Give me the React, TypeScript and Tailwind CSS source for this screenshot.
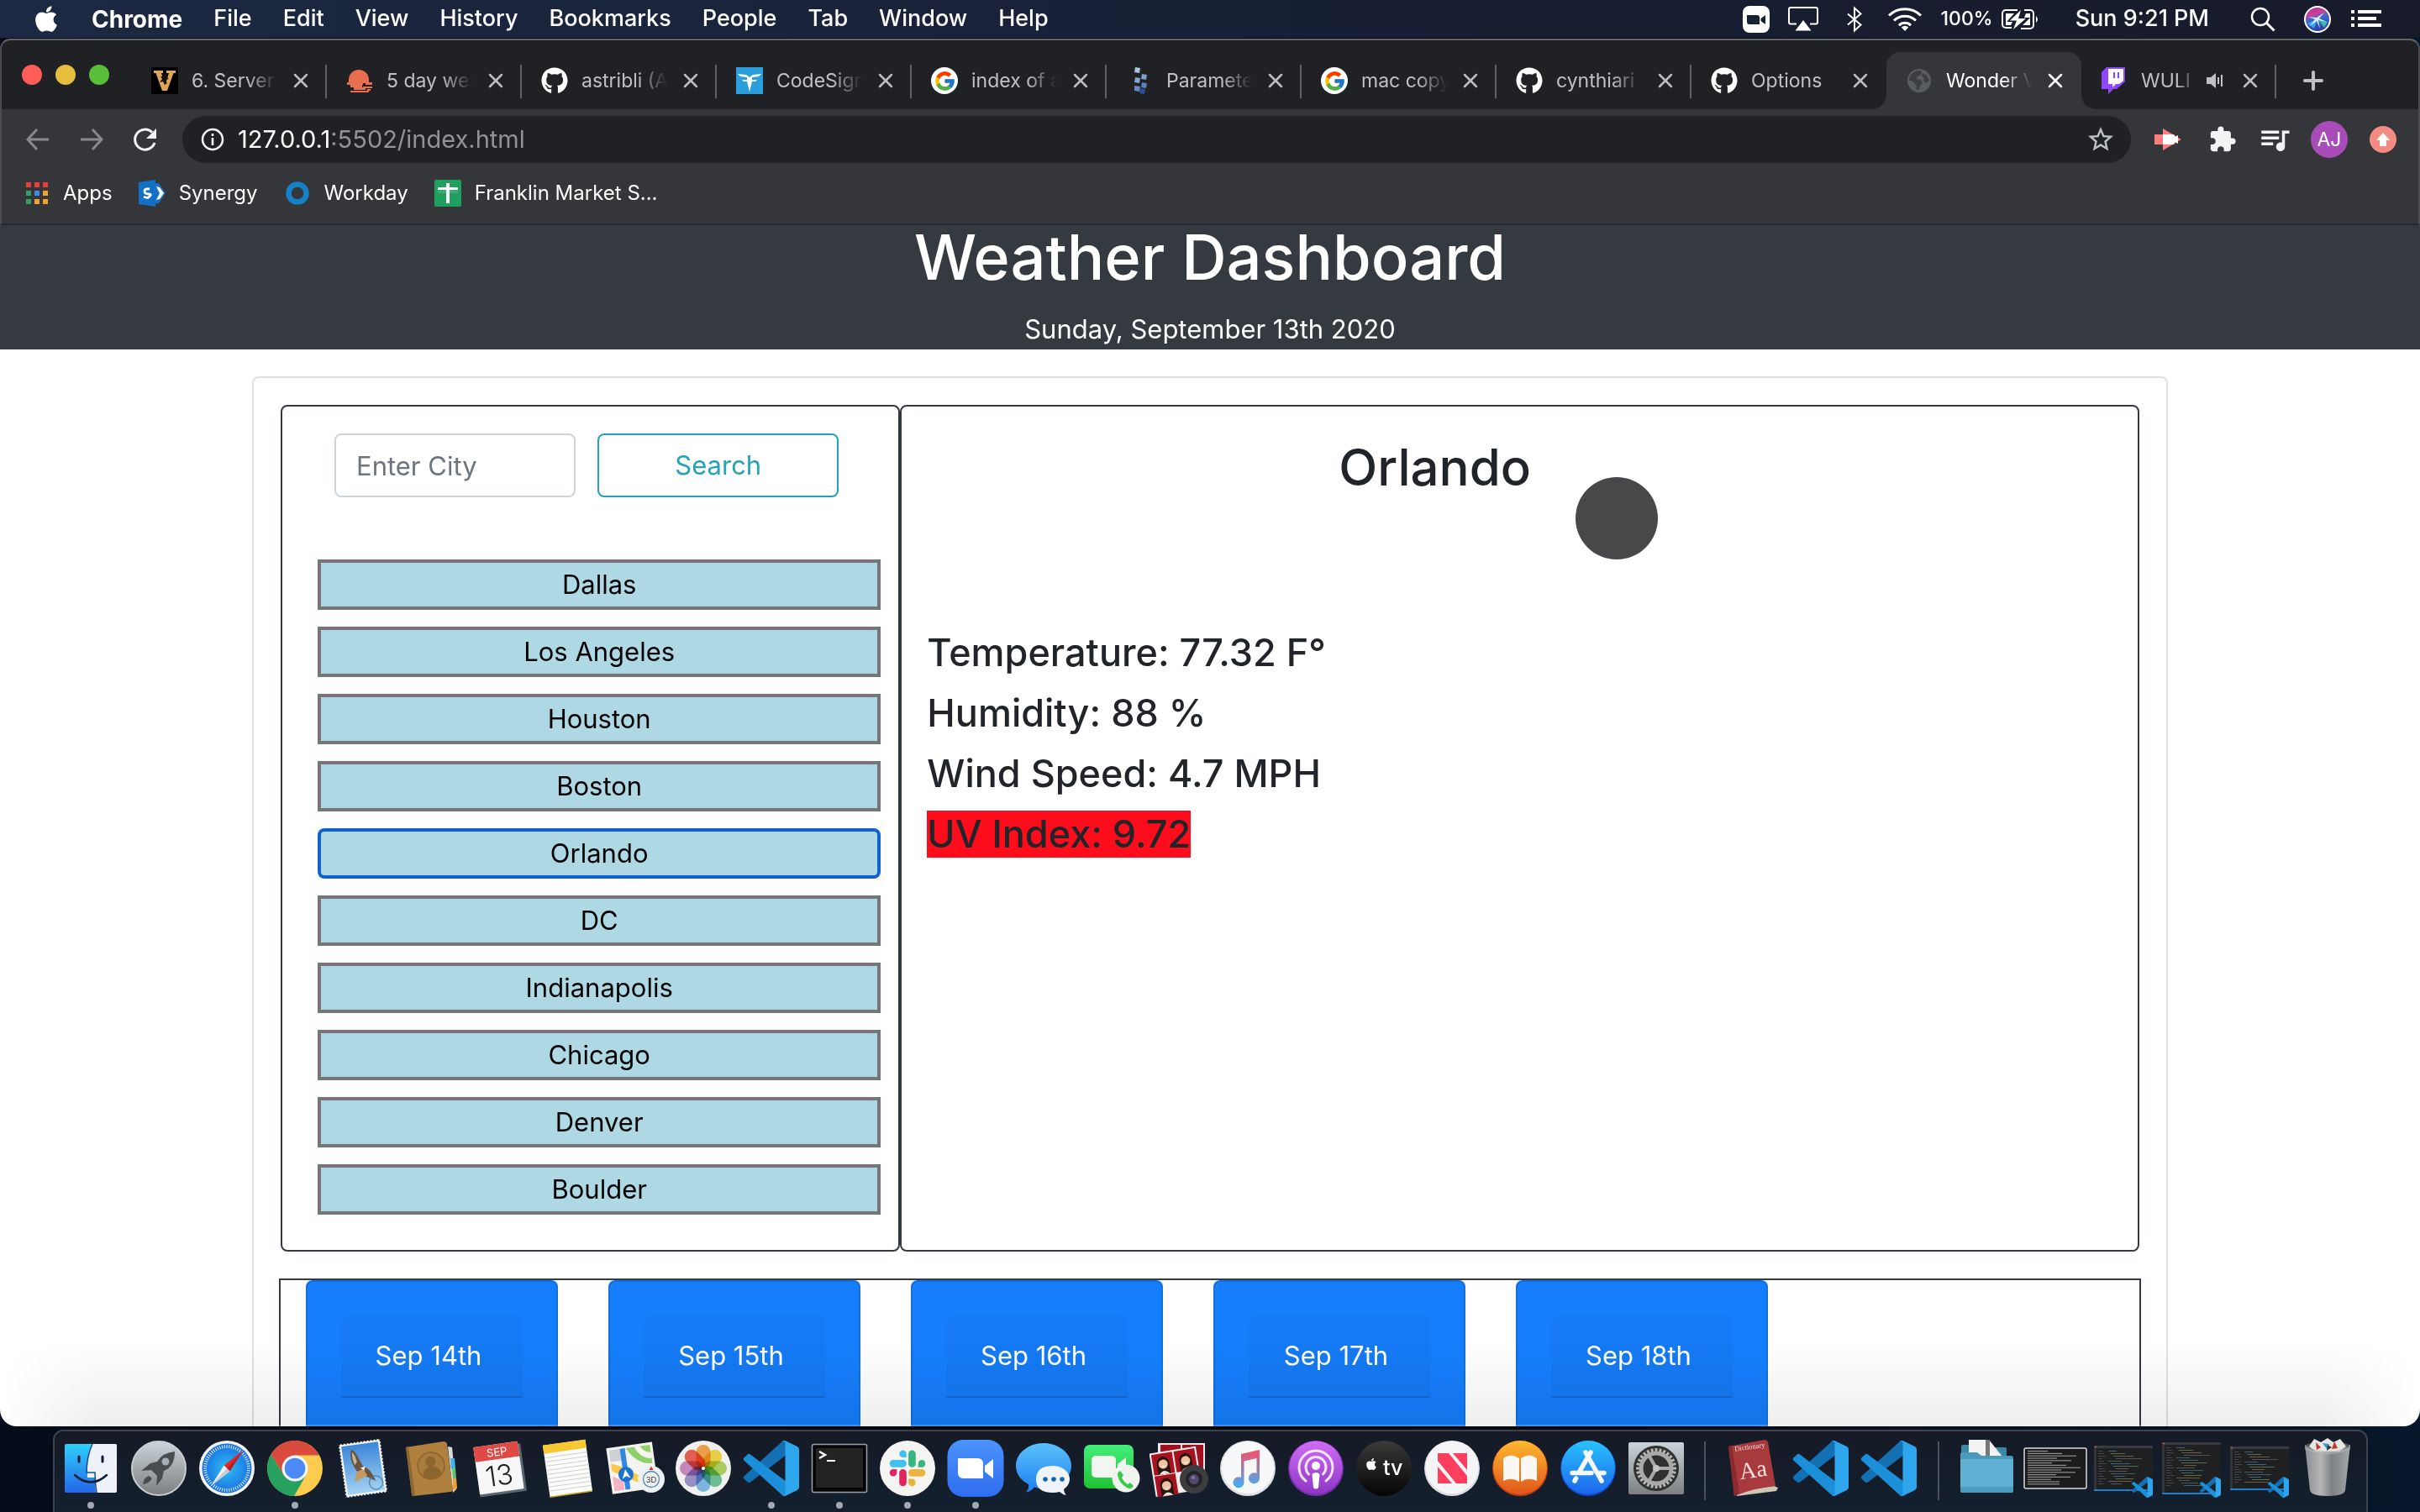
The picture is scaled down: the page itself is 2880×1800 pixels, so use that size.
import type { ReactNode } from "react";
import { FaApple, FaGithub } from "react-icons/fa6";
import { FcGoogle } from "react-icons/fc";
import { MdExtension, MdQueueMusic, MdStarBorder } from "react-icons/md";

/* ---------- menu bar ---------- */

const menus = ["File", "Edit", "View", "History", "Bookmarks", "People", "Tab", "Window", "Help"];

function MenuBar() {
  return (
    <header className="flex h-[45px] shrink-0 items-center bg-linear-to-r from-[#1c2942] via-[#182036] to-[#171b2a] pr-[46px] pl-[40px] text-[27px] font-medium text-white">
      <nav aria-label="Menu bar" className="flex items-center gap-[37px]">
        <button aria-label="Apple menu" className="h-[36px] w-8">
          <FaApple className="h-[35px] w-[30px]" />
        </button>
        <button className="text-[28px] font-bold">Chrome</button>
        {menus.map((m) => (
          <button key={m}>{m}</button>
        ))}
      </nav>
      <div className="ml-auto flex items-center">
        <svg className="h-8 w-8" viewBox="0 0 32 32">
          <rect width="32" height="32" rx="8" fill="#fff" />
          <path d="M5 11h12a3 3 0 0 1 3 3v8H8a3 3 0 0 1-3-3z M21.500 15l5.500-4v11l-5.500-4z" fill="#182036" />
        </svg>
        <svg className="ml-[22px] h-[30px] w-[36px]" viewBox="0 0 36 30" fill="none" stroke="#fff" strokeWidth="2">
          <path d="M10 20.500H3a2 2 0 0 1-2-2V3a2 2 0 0 1 2-2h30a2 2 0 0 1 2 2v15.500a2 2 0 0 1-2 2h-7" />
          <path d="M18 16l9.500 12.500h-19z" fill="#fff" stroke="none" />
        </svg>
        <svg className="ml-[33px] h-[32px] w-[20px]" viewBox="0 0 20 32" fill="none" stroke="#fff" strokeWidth="2">
          <path d="M2 9.500l15.500 13L10 29.500V2.500l7.500 7L2 22.500" />
        </svg>
        <svg className="ml-[29px] h-[30px] w-[42px]" viewBox="0 0 42 30" fill="none" stroke="#fff" strokeWidth="3">
          <path d="M2 10.500a27 27 0 0 1 38 0" />
          <path d="M8 16.500a18.500 18.500 0 0 1 26 0" />
          <path d="M14 22.200a10 10 0 0 1 14 0" />
          <path d="M21 29l-4.200-4.600a6 6 0 0 1 8.400 0z" fill="#fff" stroke="none" />
        </svg>
        <span className="ml-[22px] text-[23px]">100%</span>
        <svg className="ml-[9px] h-[26px] w-[46px]" viewBox="0 0 46 26">
          <path d="M20 2H6a4 4 0 0 0-4 4v13a4 4 0 0 0 4 4h7M24 24h11a4 4 0 0 0 4-4V6a4 4 0 0 0-4-4h-7" fill="none" stroke="#fff" strokeWidth="2" />
          <path d="M6 6h10L8 15v1h6l-2 4H6zM30 6h5v14h-9l9-9h-7z" fill="#fff" />
          <path d="M24 2L11 14.500h8L15 25l15-13h-9z" fill="#fff" />
          <path d="M42 9q4 4 0 8z" fill="#fff" />
        </svg>
        <time className="ml-[43px]">Sun 9:21 PM</time>
        <svg className="ml-[49px] h-[30px] w-[30px]" viewBox="0 0 30 30" fill="none" stroke="#fff" strokeWidth="2.500">
          <circle cx="12" cy="12" r="10" />
          <path d="M19 19l9.500 9.500" strokeWidth="3" />
        </svg>
        <svg className="ml-[34px] h-8 w-8" viewBox="0 0 32 32">
          <defs>
            <linearGradient id="siri" x1="0" y1="0" x2="0.300" y2="1">
              <stop offset="0" stopColor="#8a3aa6" />
              <stop offset="0.350" stopColor="#d63b92" />
              <stop offset="0.550" stopColor="#3a6bd0" />
              <stop offset="1" stopColor="#2c3fa8" />
            </linearGradient>
          </defs>
          <circle cx="16" cy="16" r="15" fill="url(#siri)" stroke="#fff" strokeWidth="2" />
          <path d="M16 15l12 4-4 7z" fill="#3fd6a8" opacity=".8" />
          <path d="M16 15l-12 6 8 6z" fill="#39b6f2" opacity=".8" />
          <path d="M5 13l10 1 9-6-6 7 9 4-10-2 2 10-4-9-8 6 6-8z" fill="#e8fbff" opacity=".9" />
        </svg>
        <svg className="ml-[24px] h-[22px] w-[36px]" viewBox="0 0 36 22" fill="#fff">
          <path d="M0 0h4v4H0zM8 0h28v4H8zM0 8h4v4H0zM8 8h22v4H8zM0 16h4v4H0zM8 16h28v4H8z" />
        </svg>
      </div>
    </header>
  );
}

/* ---------- favicons ---------- */

const VanderbiltIcon = (
  <svg className="size-8" viewBox="0 0 32 32">
    <rect width="32" height="32" fill="#000" />
    <path d="M3 4h11v3h-2l4.500 14L21 7h-3V4h11v3h-2.500L19 28h-6L5.500 7H3z" fill="#dca75a" />
    <path d="M16 6l3 3-2 3 4 1-4 3 2 3-3 2-2-4-4 1 3-4-2-3 4 0z" fill="#1c1306" />
  </svg>
);
const SunsetIcon = (
  <svg className="size-8" viewBox="0 0 32 32" fill="#e96e50">
    <path d="M3 19V15a12 12 0 0 1 24 0v4z" />
    <path d="M1 18h19v3H1zM23 18h8v3h-8zM5 21h14v3H5zM20 23h11v2H20zM9 24h14v3H9zM25 26h4v2h-4zM5 28h22v2H5z" />
  </svg>
);
const GithubIcon = <FaGithub className="size-8 shrink-0 text-white" />;
const CodeSignalIcon = (
  <svg className="size-8" viewBox="0 0 32 32">
    <rect width="32" height="32" fill="#2b9fdb" />
    <path d="M2 8l10 1 4 3 4-3 10-1-3 3-8 1v3h6l-2 2h-4l-3 12-3-12H9l-2-2h6v-3l-8-1z" fill="#fff" />
  </svg>
);
const GoogleIcon = (
  <span className="flex size-8 shrink-0 items-center justify-center rounded-full bg-white">
    <FcGoogle className="size-[27px]" />
  </span>
);
const ParamIcon = (
  <svg className="size-8" viewBox="0 0 32 32">
    <path d="M11 0l6 1-1 6-6-1z" fill="#a9c4de" />
    <path d="M19 8l6 1-1 6-6-1z" fill="#7f9fca" />
    <path d="M11 12l6 1-1 6-6-1z" fill="#86a6d0" />
    <path d="M19 18l6 1-1 6-6-1z" fill="#5c80bd" />
    <path d="M10 22l7 1-1 6-6-1z" fill="#6889c4" />
    <path d="M17 25l6 1-1 6-6-1z" fill="#2c4f99" />
  </svg>
);
const GlobeIcon = (
  <svg className="size-8" viewBox="0 0 32 32">
    <circle cx="16" cy="16" r="14" fill="#595c60" />
    <path d="M4 16a12 12 0 0 1 12-12l3 1-1 4-4 2-1 3 5 1 2 4-3 3-1 5a12 12 0 0 1-4-1l1-4-3-3-3-3zM20 7l5 3 3 6-4 3-3-3 1-3-3-2z" fill="#3c3e42" />
  </svg>
);
const TwitchIcon = (
  <svg className="size-8" viewBox="0 0 32 32">
    <path d="M7 0h22v17l-10 9h-4l-6 6v-6H1V6z" fill="#9147ff" />
    <path d="M9 2h18v14l-5 4h-4l-4 4v-4H9z" fill="#fff" />
    <path d="M15 6h2v7h-2zM20 6h2v7h-2z" fill="#9147ff" />
  </svg>
);

type TabInfo = { icon: ReactNode; title: string; active?: boolean; audio?: boolean; noRule?: boolean };

const tabs: TabInfo[] = [
  { icon: VanderbiltIcon, title: "6. Server" },
  { icon: SunsetIcon, title: "5 day wea" },
  { icon: GithubIcon, title: "astribli (A" },
  { icon: CodeSignalIcon, title: "CodeSign" },
  { icon: GoogleIcon, title: "index of a" },
  { icon: ParamIcon, title: "Paramete" },
  { icon: GoogleIcon, title: "mac copy" },
  { icon: GithubIcon, title: "cynthiari" },
  { icon: GithubIcon, title: "Options", noRule: true },
  { icon: GlobeIcon, title: "Wonder V", active: true, noRule: true },
  { icon: TwitchIcon, title: "WULI", audio: true },
];

function Cross() {
  return (
    <svg className="size-6" viewBox="0 0 24 24" fill="none" stroke="currentColor" strokeWidth="2.500" strokeLinecap="round">
      <path d="M5 5l14 14M19 5L5 19" />
    </svg>
  );
}

function Tab({ icon, title, active, audio, noRule }: TabInfo) {
  return (
    <li
      className={
        active
          ? "relative flex w-[232px] items-center rounded-t-2xl bg-[#35363a] pr-[19px] pl-[23px] text-white"
          : "relative flex w-[232px] items-center pr-[19px] pl-[23px] text-[#bdc1c6]"
      }
    >
      {icon}
      <a
        href="#tab"
        className={
          title === "Options"
            ? "ml-4 min-w-0 flex-1 whitespace-nowrap"
            : "ml-4 min-w-0 flex-1 whitespace-nowrap [mask-image:linear-gradient(to_right,black_65%,transparent_100%)]"
        }
      >
        {title}
      </a>
      {audio && (
        <svg className="ml-3 h-6 w-5" viewBox="0 0 20 24" fill="#bdc1c6">
          <path d="M0 8h5l6-5v18l-6-5H0zM13 8h2v8h-2zM17 5h2v14h-2z" />
        </svg>
      )}
      <button aria-label={`Close ${title}`} className={audio ? "ml-5" : "ml-4"}>
        <Cross />
      </button>
      {!noRule && <span className="absolute top-[15px] right-0 h-10 w-[2px] bg-[#5f6164]" />}
      {active && (
        <>
          <span className="absolute bottom-0 -left-4 size-4 bg-[radial-gradient(circle_at_0_0,#202124_15px,#35363a_16px)]" />
          <span className="absolute -right-4 bottom-0 size-4 bg-[radial-gradient(circle_at_100%_0,#202124_15px,#35363a_16px)]" />
        </>
      )}
    </li>
  );
}

const appDots = ["#ea3f37", "#ea3f37", "#ea3f37", "#35a060", "#3b8bf0", "#f2a32c", "#35a060", "#f2a32c", "#f2a32c"];

function BrowserChrome() {
  return (
    <div className="shrink-0 rounded-t-xl border-x-2 border-t-2 border-b-2 border-x-[#4b4c50] border-t-[#636567] border-b-[#27282a] bg-[#202124] text-[23px]">
      <div className="flex h-[82px] items-stretch pt-[14px]">
        <div className="flex w-[155px] items-center gap-4 pb-[14px] pl-6">
          <button aria-label="Close window" className="size-6 rounded-full bg-[#fc5d57]" />
          <button aria-label="Minimise window" className="size-6 rounded-full bg-[#e5bf3c]" />
          <button aria-label="Zoom window" className="size-6 rounded-full bg-[#57c038]" />
        </div>
        <ul className="flex">
          {tabs.map((t) => (
            <Tab key={t.title} {...t} />
          ))}
        </ul>
        <button aria-label="New tab" className="ml-[30px] text-[#bdc1c6]">
          <svg className="size-7" viewBox="0 0 28 28" stroke="currentColor" strokeWidth="4" strokeLinecap="round">
            <path d="M14 4v20M4 14h20" />
          </svg>
        </button>
      </div>

      <div className="flex h-[72px] items-center bg-[#35363a] pr-[26px] pl-[27px]">
        <button aria-label="Back">
          <svg className="size-8" viewBox="0 0 32 32" fill="none" stroke="#87898c" strokeWidth="3">
            <path d="M29 16H4M15 4L4 16l11 12" />
          </svg>
        </button>
        <button aria-label="Forward" className="ml-8">
          <svg className="size-8" viewBox="0 0 32 32" fill="none" stroke="#87898c" strokeWidth="3">
            <path d="M3 16h25M17 4l11 12-11 12" />
          </svg>
        </button>
        <button aria-label="Reload" className="ml-8">
          <svg className="size-8" viewBox="0 0 32 32">
            <path d="M27 20a12 12 0 1 1-3-12.500" fill="none" stroke="#f1f3f4" strokeWidth="3" />
            <path d="M29 3v12H17z" fill="#f1f3f4" />
          </svg>
        </button>
        <div className="ml-7 flex h-14 flex-1 items-center rounded-full bg-[#202124] pr-[18px] pl-5 text-[29px]">
          <svg className="size-8" viewBox="0 0 32 32">
            <circle cx="16" cy="16" r="12" fill="none" stroke="#f1f3f4" strokeWidth="2.500" />
            <path d="M14.700 9h2.600v3h-2.600zM14.700 14h2.600v9h-2.600z" fill="#f1f3f4" />
          </svg>
          <label htmlFor="address" className="ml-3.5 text-white">
            127.0.0.1
          </label>
          <input id="address" type="text" defaultValue=":5502/index.html" className="min-w-0 flex-1 bg-transparent text-[#919396] outline-none" />
          <button aria-label="Bookmark this page">
            <MdStarBorder className="size-9 text-[#bdc1c6]" />
          </button>
        </div>
        <button aria-label="Screen recorder" className="ml-7">
          <svg className="size-8" viewBox="0 0 32 32">
            <path d="M0 10h10V3l22 13-22 13v-7H0z" fill="#ff7d7d" />
            <path d="M10 10h12a2 2 0 0 1 2 2v1l4-2v10l-4-2v1a2 2 0 0 1-2 2H10z" fill="#fff" />
          </svg>
        </button>
        <button aria-label="Extensions" className="ml-8">
          <MdExtension className="size-[34px] text-[#f1f3f4]" />
        </button>
        <button aria-label="Media controls" className="ml-6">
          <MdQueueMusic className="size-[42px] text-[#f1f3f4]" />
        </button>
        <button aria-label="Profile" className="ml-[22px] flex size-11 items-center justify-center rounded-full bg-[#a84db8] text-white">
          AJ
        </button>
        <button aria-label="Update available" className="ml-[26px]">
          <svg className="size-8" viewBox="0 0 32 32">
            <circle cx="16" cy="16" r="16" fill="#f28b82" />
            <path d="M16 8l8 9h-4v7h-8v-7H8z" fill="#fff" />
          </svg>
        </button>
      </div>

      <nav aria-label="Bookmarks" className="flex h-16 items-center bg-[#35363a] pb-2 pl-[29px] text-[24px] text-white">
        <a href="#apps" className="flex items-center gap-[18px]">
          <span className="grid grid-cols-3 gap-1">
            {appDots.map((c, i) => (
              <span key={i} className="size-[6px]" style={{ backgroundColor: c }} />
            ))}
          </span>
          Apps
        </a>
        <a href="#synergy" className="ml-[31px] flex items-center gap-4">
          <svg className="size-8" viewBox="0 0 32 32">
            <path d="M0 3l20-3v32L0 29z" fill="#1470c4" />
            <path d="M20 4l4 0 8 12-8 12h-4z" fill="#1b6fbf" />
            <path d="M21 8l4 1 5 7-5 7-4 1 4-8z" fill="#fff" />
            <path d="M13 11q-6-1-6 2.500t5 3.500-1 4.500l-5-1" fill="none" stroke="#fff" strokeWidth="2.800" />
          </svg>
          Synergy
        </a>
        <a href="#workday" className="ml-[31px] flex items-center gap-4">
          <svg className="size-8" viewBox="0 0 32 32">
            <circle cx="16" cy="16" r="10.500" fill="none" stroke="#1581c6" strokeWidth="6.500" />
          </svg>
          Workday
        </a>
        <a href="#sheet" className="ml-[31px] flex items-center gap-4">
          <svg className="size-8" viewBox="0 0 32 32">
            <rect width="32" height="32" rx="2" fill="#1fa05f" />
            <path d="M4 9h24v3H4zM14 4h4v24h-4z" fill="#fff" />
            <path d="M18 12h10v4H18zM4 12h10v4H4z" fill="#43b07a" opacity=".7" />
          </svg>
          Franklin Market S...
        </a>
      </nav>
    </div>
  );
}

/* ---------- weather page ---------- */

const cities = ["Dallas", "Los Angeles", "Houston", "Boston", "Orlando", "DC", "Indianapolis", "Chicago", "Denver", "Boulder"];
const days = ["Sep 14th", "Sep 15th", "Sep 16th", "Sep 17th", "Sep 18th"];

function WeatherPage() {
  return (
    <main className="relative flex min-h-0 flex-1 flex-col text-[#212529]">
      <div className="bg-[#343a40] text-center text-white">
        <h1 className="text-[74px] leading-[76px] font-medium">Weather Dashboard</h1>
        <p className="mt-6 text-[31px] leading-[48px]">Sunday, September 13th 2020</p>
      </div>

      <div className="min-h-0 flex-1 overflow-hidden rounded-b-[20px] bg-white pt-8">
        <div className="mx-auto w-full max-w-[2280px] rounded-lg border-2 border-[#dee2e6] p-8">
          <div className="flex">
            <section className="w-1/3 rounded-lg border-2 border-[#343a40] pt-8 pb-[42px]">
              <form className="grid grid-cols-2 gap-[26px] pr-[71px] pl-[62px]" onSubmit={(e) => e.preventDefault()}>
                <input
                  type="text"
                  aria-label="City"
                  placeholder="Enter City"
                  className="h-[76px] w-full min-w-0 rounded-lg border-2 border-[#ced4da] px-6 text-[31px] placeholder:text-[#6c757d]"
                />
                <button className="h-[76px] rounded-lg border-2 border-[#24a2b8] text-[31px] text-[#24a2b8]">Search</button>
              </form>
              <ul className="mt-[74px] flex flex-col gap-5 pr-[21px] pl-[42px] text-[31px] text-black">
                {cities.map((c) => (
                  <li key={c}>
                    <button
                      className={
                        c === "Orlando"
                          ? "block h-[60px] w-full rounded-lg border-4 border-[#1063cf] bg-[#add8e4]"
                          : "block h-[60px] w-full border-4 border-[#767676] bg-[#add8e4]"
                      }
                    >
                      {c}
                    </button>
                  </li>
                ))}
              </ul>
            </section>

            <section className="flex-1 rounded-lg border-2 border-[#343a40] px-[30px] pt-8">
              <div className="flex items-start justify-center gap-0.5">
                <h2 className="text-[60px] leading-[80px] font-medium">Orlando</h2>
                <svg className="size-[200px]" viewBox="0 0 200 200" role="img" aria-label="Clear night">
                  <circle cx="100" cy="101" r="49" fill="#48484a" />
                </svg>
              </div>
              <ul className="mt-[25px] text-[45px] leading-[72px] font-medium">
                <li>Temperature: 77.32 F°</li>
                <li>Humidity: 88 %</li>
                <li>Wind Speed: 4.7 MPH</li>
                <li className="flex h-[72px] items-center">
                  <span className="bg-[#fd0d1b] leading-[56px]">UV Index: 9.72</span>
                </li>
              </ul>
            </section>
          </div>

          <section aria-label="Five day forecast" className="-mx-0.5 mt-8 flex gap-[60px] border-2 border-[#343a40] pl-[30px]">
            {days.map((d) => (
              <article key={d} className="min-h-[400px] w-[300px] rounded-lg border-2 border-[#156fdb] bg-[#167efc] p-10 text-white">
                <h3 className="rounded-t-lg border-b-2 border-black/15 bg-black/[0.03] py-6 pr-2 text-center text-[31px] leading-[48px]">{d}</h3>
              </article>
            ))}
          </section>
        </div>
      </div>

      <div className="pointer-events-none absolute inset-x-0 bottom-0 h-[100px] bg-linear-to-b from-transparent to-black/7 [mask-image:linear-gradient(to_right,transparent,black_4%,black_96%,transparent)]" />
      <div className="pointer-events-none absolute inset-x-5 bottom-0 h-[2px] bg-white/20" />
    </main>
  );
}

/* ---------- dock ---------- */

function Glyph({ children }: { children: ReactNode }) {
  return (
    <svg className="size-[72px]" viewBox="0 0 72 72">
      {children}
    </svg>
  );
}

const CodeShape = (
  <g>
    <path d="M96.460 10.800L75.860.880a6.230 6.230 0 0 0-7.110 1.210L1.300 63.590a4.170 4.170 0 0 0 0 6.160l5.510 5a4.160 4.160 0 0 0 5.320.240l81.220-61.610A4.130 4.130 0 0 1 100 16.670v-.240a6.250 6.250 0 0 0-3.540-5.630z" fill="#1270b3" />
    <path d="M96.460 89.200l-20.600 9.920a6.230 6.230 0 0 1-7.110-1.210L1.300 36.410a4.170 4.170 0 0 1 0-6.160l5.510-5a4.160 4.160 0 0 1 5.320-.240l81.220 61.610A4.130 4.130 0 0 0 100 83.330v.240a6.250 6.250 0 0 1-3.540 5.630z" fill="#1b8fd9" />
    <path d="M75.860 99.130a6.230 6.230 0 0 1-7.110-1.210c2.310 2.310 6.250.670 6.250-2.590V4.670c0-3.260-3.940-4.890-6.250-2.590a6.230 6.230 0 0 1 7.110-1.200l20.600 9.900A6.250 6.250 0 0 1 100 16.400v67.200a6.250 6.250 0 0 1-3.540 5.630z" fill="#2ea6ee" />
  </g>
);

const CodeIcon = (
  <Glyph>
    <g transform="translate(3 3) scale(.66)">{CodeShape}</g>
  </Glyph>
);

const petals = ["#f79a2e", "#f4d52a", "#a9d14c", "#5fbf8a", "#6fb6e8", "#8d86c9", "#c77fc0", "#ef4b3a"];
const ticks = Array.from({ length: 60 }, (_, i) => i * 6);
const teeth = Array.from({ length: 28 }, (_, i) => (i * 360) / 28);
const stampTeeth = Array.from({ length: 16 }, (_, i) => i);
const codeColors = ["#5a8fb8", "#7fa35e", "#b07a5c", "#6f7782", "#4f8a8a"];

function MiniEditor({ height }: { height: number }) {
  const top = 36 - height / 2;
  const rows = Array.from({ length: Math.floor((height - 12) / 3) }, (_, i) => i);
  return (
    <Glyph>
      <rect x="1" y={top} width="70" height={height} fill="#1f2022" />
      <rect x="1" y={top} width="70" height="3" fill="#3a3b3e" />
      <rect x="1" y={top + 3} width="3" height={height - 5} fill="#333538" />
      <circle cx="3" cy={top + 1.500} r="1" fill="#e0544c" />
      {rows.map((i) => (
        <g key={i} opacity=".6">
          <rect x="6" y={top + 6 + i * 3} width={5 + (i % 3) * 2} height="1" fill="#5d6064" />
          <rect x={18 + (i % 4) * 3} y={top + 6 + i * 3} width={10 + ((i * 7) % 22)} height="1" fill={codeColors[i % 5]} />
        </g>
      ))}
      <rect x="1" y={top + height - 2} width="70" height="2" fill="#1b7fd0" />
      <g transform="translate(46 46) scale(.25)">{CodeShape}</g>
    </Glyph>
  );
}

function Tile({ x, y }: { x: number; y: number }) {
  return (
    <g transform={`translate(${x} ${y})`}>
      <rect width="25" height="25" fill="#a8121f" />
      <path d="M5 25V12a7.500 8 0 0 1 15 0v13z" fill="#2a1513" />
      <circle cx="12.500" cy="13" r="5.500" fill="#eec3a2" />
      <path d="M9.500 15q3 3 6 0z" fill="#fff" />
      <path d="M6 25q6.500-8 13 0z" fill="#e9e3df" />
    </g>
  );
}

type DockItem = { name: string; running?: boolean; art: ReactNode };

const mainItems: DockItem[] = [
  {
    name: "Finder",
    running: true,
    art: (
      <Glyph>
        <rect x="5" y="7" width="62" height="58" rx="2" fill="url(#finder)" />
        <path d="M38 7h27a2 2 0 0 1 2 2v54a2 2 0 0 1-2 2H42q-1-9-1-18h-9Q31 22 38 7z" fill="#eef1f7" />
        <path d="M38 7Q31 22 31 41h10q0 12 2 24" fill="none" stroke="#1d4f8a" strokeWidth="1.500" />
        <path d="M22 22v6M50 22v6" stroke="#0c1c30" strokeWidth="3" strokeLinecap="round" />
        <path d="M17 44q19 17 38 0" fill="none" stroke="#0c1c30" strokeWidth="2.500" strokeLinecap="round" />
      </Glyph>
    ),
  },
  {
    name: "Launchpad",
    art: (
      <Glyph>
        <circle cx="36" cy="36" r="32" fill="url(#silver)" stroke="#c9ced2" strokeWidth="2" />
        <path d="M55 16q-14 1-21 12l-8 2-11 9 12-1 3 3 4 4-1 12 7-9 2-9Q55 34 55 16z" fill="#4a4d50" />
        <path d="M24 45q-6 2-7 10 8-1 11-7z" fill="#4a4d50" />
        <circle cx="44" cy="28" r="4.500" fill="#a6b0b6" />
      </Glyph>
    ),
  },
  {
    name: "Safari",
    art: (
      <Glyph>
        <circle cx="36" cy="36" r="33" fill="#f1f3f5" />
        <circle cx="36" cy="36" r="29.500" fill="url(#safari)" />
        {ticks.map((a) => (
          <path key={a} d="M36 8v4" stroke="#d8efff" strokeWidth="1" transform={`rotate(${a} 36 36)`} />
        ))}
        <path d="M55 15L39.500 39.500l-7-7z" fill="#e8272b" />
        <path d="M17 57l15.500-24.500 7 7z" fill="#f2f2f2" />
        <path d="M55 15L39.500 39.500 36 36z" fill="#b91d24" />
        <path d="M17 57l22.500-17.500L36 36z" fill="#c9ccd0" />
      </Glyph>
    ),
  },
  {
    name: "Chrome",
    running: true,
    art: (
      <Glyph>
        <circle cx="36" cy="36" r="33" fill="#fdcb4d" />
        <path d="M7.400 19.500A33 33 0 0 1 65 20.500H36L22.600 43.700z" fill="#db4a3f" />
        <path d="M7.400 19.500L22.600 43.700 49.400 43.700 35 69A33 33 0 0 1 7.400 19.500z" fill="#26a15f" />
        <circle cx="36" cy="36" r="15.500" fill="#f3f5f8" />
        <circle cx="36" cy="36" r="12.300" fill="#4c8bf5" />
      </Glyph>
    ),
  },
  {
    name: "Mail",
    art: (
      <Glyph>
        <g transform="rotate(-8 36 36)">
          <rect x="11" y="4" width="50" height="64" fill="#f4f5f6" />
          {stampTeeth.map((i) => (
            <g key={i} fill="#161c28">
              <circle cx="11" cy={6 + i * 4} r="1.100" />
              <circle cx="61" cy={6 + i * 4} r="1.100" />
              {i < 13 && <circle cx={12 + i * 4} cy="4" r="1.100" />}
              {i < 13 && <circle cx={12 + i * 4} cy="68" r="1.100" />}
            </g>
          ))}
          <rect x="14" y="7" width="44" height="58" fill="url(#sky)" />
          <path d="M25 12q5 2 7 10l4 11q9 4 13 20l-9-6-6-3-9 4 4-8-3-7q-5-10-1-21z" fill="#6b5440" />
          <path d="M26 15q3 5 4 12l-3 4q-3-8-1-16z" fill="#c4b49b" />
          <path d="M28 39l8-2 4 8-8 3-8 3z" fill="#c39a64" />
          <path d="M33 35l6-1-2 5z" fill="#f1ede4" />
          <circle cx="49" cy="55" r="8" fill="none" stroke="#466f96" strokeWidth="1.500" opacity=".7" />
        </g>
      </Glyph>
    ),
  },
  {
    name: "Contacts",
    art: (
      <Glyph>
        <path d="M56 10l5 1 5 50-4 4z" fill="#d6dadd" />
        <path d="M59 24l5 0 1 12-5 1z" fill="#3fb4e8" />
        <path d="M61 36l4 0 1 12-4 1z" fill="#5cc66a" />
        <path d="M62 48l4 0 1 12-5 2z" fill="#f0a035" />
        <path d="M6 11L51 4q3 0 4 3l7 54q0 3-3 3L15 69q-2 0-2-2z" fill="#b0803f" />
        <path d="M6 11l3-1 8 59h-3q-1 0-1-2z" fill="#8e6630" />
        <g transform="rotate(-7 36 33)">
          <circle cx="36" cy="33" r="16" fill="#a87a3c" stroke="#8c642e" strokeWidth="1.500" />
          <circle cx="36" cy="28" r="6" fill="#8c642e" />
          <path d="M25 44q1-10 11-10t11 10q-11 9-22 0z" fill="#8c642e" />
        </g>
      </Glyph>
    ),
  },
  {
    name: "Calendar",
    art: (
      <Glyph>
        <g transform="rotate(-8 36 36)">
          <rect x="9" y="10" width="56" height="57" rx="1" fill="#5a6670" />
          <rect x="9" y="7" width="53" height="57" rx="1" fill="#f7f7f7" />
          <path d="M9 7h53v18H9z" fill="#e04a46" />
          <text x="36" y="21" textAnchor="middle" fontSize="13" fill="#fff" fontFamily="Inter">
            SEP
          </text>
          <text x="35" y="56" textAnchor="middle" fontSize="33" fontWeight="300" fill="#222" fontFamily="Inter">
            13
          </text>
        </g>
      </Glyph>
    ),
  },
  {
    name: "Notes",
    art: (
      <Glyph>
        <g transform="rotate(-8 36 36)">
          <rect x="11" y="5" width="51" height="62" fill="#fbfbf9" />
          <rect x="11" y="5" width="51" height="10" fill="#f7c830" />
          <path d="M11 20h51M11 25h51M11 30h51M11 35h51M11 40h51M11 45h51M11 50h51M11 55h51M11 60h51" stroke="#cfcfcf" strokeWidth="1" />
          <path d="M11 67h51" stroke="#c9a227" strokeWidth="1.500" />
        </g>
      </Glyph>
    ),
  },
  {
    name: "Maps",
    art: (
      <Glyph>
        <g transform="rotate(-8 33 36)">
          <rect x="5" y="8" width="55" height="55" fill="#f4f3ef" />
          <path d="M8 11h14v14H8z" fill="#cfd2d4" />
          <path d="M28 11h29v22q-18 0-29-22z" fill="#8fd06a" />
          <path d="M38 11h7q4 8 12 9v7Q44 26 38 11z" fill="#f4f3ef" />
          <path d="M8 27l10 4 36 24v5h-6L8 36z" fill="#f9c74a" />
          <path d="M8 42l12 8v10H8z" fill="#f5b3c2" />
          <path d="M21 11h6v49h-6z" fill="#2f87e0" />
          <circle cx="24" cy="42" r="9" fill="#1c72cf" />
          <path d="M24 36l5 11-5-3-5 3z" fill="#fff" />
        </g>
        <circle cx="55" cy="49" r="16" fill="#eef0f2" />
        <circle cx="55" cy="49" r="9.500" fill="none" stroke="#4f8fa8" strokeWidth="1.300" />
        <path d="M55 33.500l2.500 4.500h-5z" fill="#e03030" />
        <text x="55" y="52.500" textAnchor="middle" fontSize="9.500" fill="#333" fontFamily="Inter">
          3D
        </text>
      </Glyph>
    ),
  },
  {
    name: "Photos",
    art: (
      <Glyph>
        <circle cx="36" cy="36" r="33" fill="#f0f0ef" />
        {petals.map((c, i) => (
          <rect key={c} x="27.500" y="8" width="17" height="28" rx="8.500" fill={c} opacity=".85" className="mix-blend-multiply" transform={`rotate(${i * 45} 36 36)`} />
        ))}
        <circle cx="36" cy="36" r="2" fill="#fff" />
      </Glyph>
    ),
  },
  { name: "Visual Studio Code", running: true, art: CodeIcon },
  {
    name: "Terminal",
    running: true,
    art: (
      <Glyph>
        <rect x="3.500" y="7.500" width="65" height="57" rx="2" fill="#060606" stroke="#9aa0a6" strokeWidth="1.500" />
        <rect x="8" y="12" width="56" height="47" fill="#232323" />
        <path d="M12 16l7 4-7 4" fill="none" stroke="#fff" strokeWidth="2.500" />
        <path d="M21 27h10" stroke="#fff" strokeWidth="2" />
      </Glyph>
    ),
  },
  {
    name: "Slack",
    running: true,
    art: (
      <Glyph>
        <circle cx="36" cy="36" r="33" fill="#f4f4f3" />
        <path d="M30.500 14.500a4.300 4.300 0 0 1 4.300 4.300v4.300h-4.300a4.300 4.300 0 0 1 0-8.600zM19 26h11.500a4.300 4.300 0 0 1 0 8.700H19a4.300 4.300 0 0 1 0-8.700z" fill="#3fc3ec" />
        <path d="M57.300 30.400a4.300 4.300 0 0 1-4.300 4.300h-4.300v-4.300a4.300 4.300 0 0 1 8.600 0zM45.800 18.800v11.600a4.300 4.300 0 0 1-8.700 0V18.800a4.300 4.300 0 0 1 8.700 0z" fill="#37b67f" />
        <path d="M41.400 57.200a4.300 4.300 0 0 1-4.300-4.300v-4.300h4.300a4.300 4.300 0 0 1 0 8.600zM53 45.700H41.400a4.300 4.300 0 0 1 0-8.700H53a4.300 4.300 0 0 1 0 8.700z" fill="#ecb340" />
        <path d="M14.700 41.300A4.300 4.300 0 0 1 19 37h4.300v4.300a4.300 4.300 0 0 1-8.600 0zM26.200 52.900V41.300a4.300 4.300 0 0 1 8.600 0v11.600a4.300 4.300 0 0 1-8.600 0z" fill="#e0245e" />
      </Glyph>
    ),
  },
  {
    name: "Zoom",
    running: true,
    art: (
      <Glyph>
        <rect x="2.500" y="2" width="67" height="68" rx="19" fill="url(#zoom)" />
        <path d="M15 24h24a6 6 0 0 1 6 6v18H21a6 6 0 0 1-6-6zM47 33l10-8v23l-10-8z" fill="#fff" />
      </Glyph>
    ),
  },
  {
    name: "Messages",
    art: (
      <Glyph>
        <path d="M36 6c18 0 33 12 33 27S54 60 36 60q-6 0-11-1.500-4 5-10 6 4-4 3-9.500Q3 47 3 33C3 18 18 6 36 6z" fill="url(#msg)" />
        <path d="M47 33c11 0 20 7 20 16 0 5-3 9-7 12q0 4 3 7-5-1-8-4-4 1-8 1-20 0-20-16 0-16 20-16z" fill="#eef4fa" />
        <circle cx="38" cy="49" r="2.800" fill="#1565b5" />
        <circle cx="48" cy="49" r="2.800" fill="#1565b5" />
        <circle cx="58" cy="49" r="2.800" fill="#1565b5" />
      </Glyph>
    ),
  },
  {
    name: "FaceTime",
    art: (
      <Glyph>
        <rect x="3" y="8" width="59" height="52" rx="7" fill="url(#ft)" />
        <rect x="12" y="21" width="29" height="26" rx="5" fill="#f2f6f1" />
        <path d="M43 31l10-8v23l-10-7z" fill="#f2f6f1" />
        <circle cx="53" cy="48" r="16.500" fill="#f0f3ee" />
        <path d="M46 39l4 5-2 3q3 6 7 8l3-2 4 4q-3 5-8 2-9-5-11-15 0-4 3-5z" fill="#37c94b" />
      </Glyph>
    ),
  },
  {
    name: "Photo Booth",
    art: (
      <Glyph>
        <rect x="10" y="6" width="56" height="40" fill="#f0e8e8" />
        <rect x="13" y="8" width="51" height="36" fill="#a01020" />
        <path d="M38 6v20" stroke="#f0e8e8" strokeWidth="2" />
        <g transform="rotate(-9 30 38)">
          <rect x="3" y="14" width="56" height="52" fill="#f3eded" />
          <Tile x={5} y={16} />
          <Tile x={32} y={16} />
          <Tile x={5} y={42} />
        </g>
        <circle cx="53" cy="49" r="17" fill="#3c3d3f" />
        <circle cx="53" cy="49" r="10" fill="#232426" />
        <circle cx="53" cy="49" r="6" fill="#54466f" />
        <circle cx="52" cy="47" r="2" fill="#8a72b0" />
      </Glyph>
    ),
  },
  {
    name: "Music",
    art: (
      <Glyph>
        <circle cx="36" cy="36" r="33" fill="#dfe1e6" />
        <circle cx="36" cy="35" r="31" fill="#f7f8fa" />
        <path d="M28 19l22-5v34a6.500 6.500 0 1 1-3.500-6V24l-15 3.500V53a6.500 6.500 0 1 1-3.500-6z" fill="url(#music)" />
      </Glyph>
    ),
  },
  {
    name: "Podcasts",
    art: (
      <Glyph>
        <circle cx="36" cy="36" r="33" fill="#7a2fb0" />
        <circle cx="36" cy="35" r="31.500" fill="url(#pod)" />
        <circle cx="36" cy="33" r="5" fill="#fff" />
        <path d="M31.500 43q4.500-4 9 0l-1.500 16q-3 3-6 0z" fill="#fff" />
        <path d="M27.500 43a12 12 0 1 1 17 0M24 51a20 20 0 1 1 24 0" fill="none" stroke="#f3e6fb" strokeWidth="3" strokeLinecap="round" />
      </Glyph>
    ),
  },
  {
    name: "TV",
    art: (
      <Glyph>
        <circle cx="36" cy="36" r="33" fill="url(#tv)" />
        <FaApple x={13} y={23} width={22} height={24} color="#fff" />
        <text x="35" y="44" fontSize="25" fontWeight="500" fill="#fff" fontFamily="Inter">
          tv
        </text>
      </Glyph>
    ),
  },
  {
    name: "News",
    art: (
      <Glyph>
        <circle cx="36" cy="36" r="33" fill="#dcdde2" />
        <circle cx="36" cy="35" r="31.500" fill="#f5f5f8" />
        <path d="M19 18h13l22 27v9H41L19 27zM37 18h17v20zM19 34v20h17z" fill="#fb3f5c" />
      </Glyph>
    ),
  },
  {
    name: "Books",
    art: (
      <Glyph>
        <circle cx="36" cy="36" r="33" fill="#c63f14" />
        <circle cx="36" cy="35" r="32" fill="url(#books)" />
        <path d="M35 24q-10-7-19 0v27q10-5 19 1zM37 24q10-7 19 0v27q-10-5-19 1z" fill="#fbf7f2" />
      </Glyph>
    ),
  },
  {
    name: "App Store",
    art: (
      <Glyph>
        <circle cx="36" cy="36" r="33" fill="#1248cf" />
        <circle cx="36" cy="35" r="32" fill="url(#store)" />
        <g stroke="#f5f9fc" strokeWidth="5.500" strokeLinecap="round">
          <path d="M39 17L25 41M33 17l19 34M17 41.500h23M47 41.500h8M21.500 48l-1.500 3" />
        </g>
      </Glyph>
    ),
  },
  {
    name: "System Preferences",
    art: (
      <Glyph>
        <rect x="3" y="5" width="66" height="62" rx="2" fill="url(#silver)" />
        <circle cx="36" cy="36" r="27" fill="#2f3032" />
        {teeth.map((a) => (
          <path key={a} d="M34.500 12h3v6h-3z" fill="#b5b5b3" transform={`rotate(${a} 36 36)`} />
        ))}
        <circle cx="36" cy="36" r="18" fill="none" stroke="#a9a9a7" strokeWidth="5" />
        <path d="M36 36h17M36 36l-8.500-15M36 36l-8.500 15" stroke="#a9a9a7" strokeWidth="4" />
        <circle cx="36" cy="36" r="4" fill="#c4c4c2" />
      </Glyph>
    ),
  },
];

const extraItems: DockItem[] = [
  {
    name: "Dictionary",
    art: (
      <Glyph>
        <path d="M15 64l46-7 5 2-2 4-47 6z" fill="#cfc6b4" />
        <path d="M7 10L50 2q3 0 4 3l9 52q-24 2-49 12z" fill="#a8393d" />
        <path d="M7 10l4-1 9 57-6 3z" fill="#8a2a2f" />
        <g transform="rotate(-8 36 36)" fill="#f3dede" fontFamily="Liberation Serif" textAnchor="middle">
          <text x="36" y="13" fontSize="8.500">
            Dictionary
          </text>
          <text x="36" y="47" fontSize="28">
            Aa
          </text>
        </g>
      </Glyph>
    ),
  },
  { name: "Visual Studio Code project", art: CodeIcon },
  { name: "Visual Studio Code workspace", art: CodeIcon },
];

const terminalRows = Array.from({ length: 15 }, (_, i) => i);

const minimised: DockItem[] = [
  {
    name: "Downloads",
    art: (
      <Glyph>
        <path d="M5 10q0-2 2-2h16l5 3h29q2 0 2 2v20H5z" fill="#3b87a8" />
        <path d="M14 2h24l16 20H14z" fill="#f3f3f3" />
        <path d="M34 2h5v20h-5z" fill="#777" />
        <path d="M4 19q0-2 2-2h18l5 4h35q3 0 3 3v38q0 3-3 3H7q-3 0-3-3z" fill="#4a9abd" />
        <path d="M4 25h63v37q0 3-3 3H7q-3 0-3-3z" fill="#5fb0d2" />
        <path d="M4 58h63v4q0 3-3 3H7q-3 0-3-3z" fill="#4c9cc0" />
      </Glyph>
    ),
  },
  {
    name: "Terminal window",
    art: (
      <svg className="h-[72px] w-[76px]" viewBox="0 0 76 72">
        <rect x="1" y="12" width="74" height="48" rx="2" fill="#1c1c1c" stroke="#d6dade" strokeWidth="1.500" />
        {terminalRows.map((i) => (
          <rect key={i} x="5" y={15 + i * 2.800} width={i > 12 ? 38 : 24 + ((i * 17) % 40)} height="1.200" fill="#8f8f8f" />
        ))}
      </svg>
    ),
  },
  { name: "Editor window one", art: <MiniEditor height={54} /> },
  { name: "Editor window two", art: <MiniEditor height={62} /> },
  { name: "Editor window three", art: <MiniEditor height={52} /> },
  {
    name: "Trash",
    art: (
      <Glyph>
        <path d="M9 8l54 0-6 54q-1 7-21 7t-21-7z" fill="url(#bin)" />
        <ellipse cx="36" cy="10" rx="27" ry="6" fill="#565a5d" />
        <path d="M14 10l6-9 8 4 8-5 7 5 8-4 7 9-8 6H22z" fill="#e8e6e3" />
        <path d="M22 5l6 6-5 3zM44 4l4 8-7 1z" fill="#c0392b" />
        <path d="M30 6l8 1-3 6z" fill="#3a9bd0" />
        <path d="M36 8l5 3-6 4z" fill="#333" />
        <path d="M9 9q27 13 54 0v4q-27 12-54 0z" fill="#b9bcbe" opacity=".6" />
      </Glyph>
    ),
  },
];

function DockGroup({ items }: { items: DockItem[] }) {
  return (
    <>
      {items.map((it) => (
        <button key={it.name} aria-label={it.name} className="flex w-[81px] flex-col items-center">
          {it.art}
          {it.running && <span className="mt-1 size-2 rounded-full bg-[#a4a8b4]" />}
        </button>
      ))}
    </>
  );
}

const gradients: [string, string, string][] = [
  ["finder", "#2fd0fb", "#2367e8"],
  ["silver", "#c9d4da", "#7d7f80"],
  ["sky", "#3b86da", "#a3d3f1"],
  ["zoom", "#4a93fb", "#2f6df0"],
  ["msg", "#5ac2fb", "#1d7ff2"],
  ["ft", "#44ee79", "#1fc233"],
  ["music", "#fb4d66", "#3fb0f7"],
  ["pod", "#d06df5", "#8e37c4"],
  ["tv", "#3a3a3a", "#050505"],
  ["books", "#fdb92f", "#e2561b"],
  ["store", "#28c3fb", "#1d66ee"],
];

function Dock() {
  return (
    <footer className="flex shrink-0 justify-center">
      <svg className="absolute size-0" aria-hidden="true">
        <defs>
          {gradients.map(([id, a, b]) => (
            <linearGradient key={id} id={id} x1="0" y1="0" x2="0" y2="1">
              <stop offset="0" stopColor={a} />
              <stop offset="1" stopColor={b} />
            </linearGradient>
          ))}
          <linearGradient id="bin" x1="0" y1="0" x2="1" y2="0">
            <stop offset="0" stopColor="#8b8e90" />
            <stop offset="0.350" stopColor="#b4b6b8" />
            <stop offset="0.600" stopColor="#7e8183" />
            <stop offset="1" stopColor="#a5a8aa" />
          </linearGradient>
          <radialGradient id="safari">
            <stop offset="0" stopColor="#2bc0f4" />
            <stop offset="1" stopColor="#1c6fe0" />
          </radialGradient>
        </defs>
      </svg>
      <nav aria-label="Dock" className="flex h-[98px] items-start rounded-t-xl border-x-2 border-t-2 border-[#3d424d] bg-linear-to-b from-[#151a26] to-[#14202e] pt-2 pr-[5px] pl-[3px]">
        <DockGroup items={mainItems} />
        <span className="mx-4 mt-1 h-[70px] w-[2px] bg-[#4a505c]" />
        <DockGroup items={extraItems} />
        <span className="mx-[17px] mt-1 h-[70px] w-[2px] bg-[#4a505c]" />
        <DockGroup items={minimised} />
      </nav>
    </footer>
  );
}

export default function App() {
  return (
    <div className="flex h-screen flex-col overflow-hidden bg-linear-to-r from-[#050d1a] via-[#03060c] to-[#07172b] font-[Inter,sans-serif]">
      <MenuBar />
      <div className="mb-1 flex min-h-0 flex-1 flex-col pt-[1px]">
        <BrowserChrome />
        <WeatherPage />
      </div>
      <Dock />
    </div>
  );
}
